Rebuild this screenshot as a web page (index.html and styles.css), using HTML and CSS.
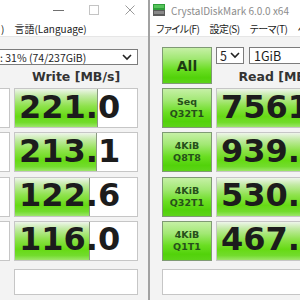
FILE: index.html
```html
<!DOCTYPE html>
<html lang="ja">
<head>
    <meta charset="UTF-8">
    <title>CrystalDiskMark</title>
    <link rel="stylesheet" href="styles.css">
</head>
<body>
    <div class="screen">
        <div class="win win-left">
            <div class="titlebar titlebar-left">
                <span class="ctl">
                    <svg width="11" height="11" viewBox="0 0 11 11"><rect x="0" y="5" width="11" height="1" fill="#707070"/></svg>
                </span>
                <span class="ctl">
                    <svg width="10" height="10" viewBox="0 0 10 10"><rect x="0.5" y="0.5" width="9" height="9" fill="none" stroke="#c4c4c4" stroke-width="1"/></svg>
                </span>
                <span class="ctl">
                    <svg width="10" height="10" viewBox="0 0 10 10"><path d="M0.5 0.5 L9.5 9.5 M9.5 0.5 L0.5 9.5" stroke="#9a9a9a" stroke-width="1"/></svg>
                </span>
            </div>
            <div class="menubar menubar-left">
                <span class="menu-cut">)</span>
                <span>言語(Language)</span>
            </div>
            <div class="content content-left">
                <div class="drive-select">
                    <span>: 31% (74/237GiB)</span>
                    <svg class="chev" width="10" height="7" viewBox="0 0 10 7"><polyline points="1,1 5,5 9,1" fill="none" stroke="#222" stroke-width="1.6"/></svg>
                </div>
                <div class="head-row">
                    <div></div>
                    <div class="col-head">Write [MB/s]</div>
                </div>
                <div class="rows rows-left">
                    <div class="cell stub"></div>
                    <div class="cell value"><div class="bar" style="width: 67%"></div><span>221.0</span></div>
                    <div class="cell stub"></div>
                    <div class="cell value"><div class="bar" style="width: 66%"></div><span>213.1</span></div>
                    <div class="cell stub"></div>
                    <div class="cell value"><div class="bar" style="width: 61%"></div><span>122.6</span></div>
                    <div class="cell stub"></div>
                    <div class="cell value"><div class="bar" style="width: 60.5%"></div><span>116.0</span></div>
                </div>
                <div class="comment"></div>
            </div>
        </div>

        <div class="win win-right">
            <div class="titlebar titlebar-right">
                <svg class="app-icon" width="12" height="12" viewBox="0 0 12 12">
                    <rect x="0" y="0" width="12" height="6" fill="#2f9e3a"/>
                    <rect x="1" y="1" width="10" height="3" fill="#55c45a"/>
                    <rect x="0" y="6" width="12" height="6" fill="#5c5c5c"/>
                    <rect x="1" y="7" width="10" height="3" fill="#8a8a8a"/>
                </svg>
                <span class="app-title">CrystalDiskMark 6.0.0 x64</span>
            </div>
            <div class="menubar menubar-right">
                <span>ファイル(F)</span>
                <span>設定(S)</span>
                <span>テーマ(T)</span>
                <span>ヘルプ(H)</span>
            </div>
            <div class="content content-right">
                <div class="top-grid">
                    <div class="btn btn-all">All</div>
                    <div class="controls">
                        <div class="select-small">
                            <span>5</span>
                            <svg width="10" height="7" viewBox="0 0 10 7"><polyline points="1,1 5,5 9,1" fill="none" stroke="#222" stroke-width="1.6"/></svg>
                        </div>
                        <div class="select-size"><span>1GiB</span></div>
                    </div>
                    <div class="col-head col-head-read">Read [MB/s]</div>
                </div>
                <div class="rows rows-right">
                    <div class="btn">Seq<br>Q32T1</div>
                    <div class="cell value"><div class="bar" style="width: 100%"></div><span>7561</span></div>
                    <div class="btn">4KiB<br>Q8T8</div>
                    <div class="cell value"><div class="bar" style="width: 100%"></div><span>939.8</span></div>
                    <div class="btn">4KiB<br>Q32T1</div>
                    <div class="cell value"><div class="bar" style="width: 100%"></div><span>530.8</span></div>
                    <div class="btn">4KiB<br>Q1T1</div>
                    <div class="cell value"><div class="bar" style="width: 100%"></div><span>467.9</span></div>
                </div>
                <div class="comment comment-right"></div>
            </div>
        </div>
    </div>
</body>
</html>
```

FILE: styles.css
```css
body {
    margin: 0;
    font-family: "Noto Sans CJK JP", "Noto Sans", sans-serif;
    color: #1e1e1e;
}

.screen {
    display: flex;
    width: 300px;
    height: 300px;
    overflow: hidden;
    background-color: #f3f3f3;
}

.win {
    flex: none;
    background-color: #f3f3f3;
}

.win-left {
    width: 148px;
    border-right: 2px solid #a2a2a2;
}

.win-right {
    width: 300px;
}

/* title bars */
.titlebar {
    height: 20px;
    background-color: #fff;
    display: flex;
    align-items: center;
}

.titlebar-left {
    justify-content: flex-end;
}

.ctl {
    width: 36px;
    height: 20px;
    display: flex;
    align-items: center;
    justify-content: center;
}

.ctl svg {
    display: block;
}

.titlebar-right {
    padding-left: 3px;
}

.app-icon {
    display: block;
}

.app-title {
    margin-left: 6px;
    font-size: 10px;
    color: #8c8c8c;
    white-space: nowrap;
}

/* menus */
.menubar {
    height: 16px;
    background-color: #fff;
    border-bottom: 1px solid #e6e6e6;
    display: flex;
    align-items: center;
    font-size: 10px;
    font-feature-settings: "palt";
    white-space: nowrap;
    color: #222;
}

.menu-cut {
    margin-left: 1px;
    margin-right: 10px;
}

.menubar-right {
    padding-left: 6px;
    gap: 10px;
    letter-spacing: -0.5px;
}

/* content */
.content-left {
    padding: 12px 10px 0 0;
}

.content-right {
    padding: 10px 0 0 12px;
}

.drive-select {
    height: 14px;
    border: 1px solid #7c7c7c;
    border-left: none;
    background-color: #fff;
    display: flex;
    align-items: center;
    justify-content: space-between;
    font-size: 10.5px;
    white-space: nowrap;
    padding-right: 5px;
}

.head-row {
    height: 23px;
    display: grid;
    grid-template-columns: 10px 1fr;
    gap: 4px;
}

.col-head {
    font-family: "DejaVu Sans", sans-serif;
    font-weight: bold;
    font-size: 12.5px;
    color: #333;
    display: flex;
    align-items: center;
    justify-content: center;
    white-space: nowrap;
}

.rows {
    display: grid;
    grid-auto-rows: 40px;
    row-gap: 4.33px;
    column-gap: 4px;
}

.rows-left {
    grid-template-columns: 10px 1fr;
}

.rows-right {
    grid-template-columns: 50px 130px;
}

.cell {
    border: 1px solid #c6c6c6;
    background-color: #fff;
    box-sizing: border-box;
}

.stub {
    border-left: none;
}

.value {
    position: relative;
    display: flex;
    align-items: center;
    padding-left: 4px;
    font-family: "DejaVu Sans", sans-serif;
    font-weight: bold;
    font-size: 32px;
    color: #1c1c1c;
    white-space: nowrap;
    overflow: hidden;
}

.value span {
    position: relative;
    margin-top: -3px;
}

.bar {
    position: absolute;
    left: 0;
    top: 0;
    bottom: 0;
    border-right: 1px solid #8a9a80;
    background: linear-gradient(to bottom, #eef5ea 0%, #c2eaa4 18%, #8ee24c 45%, #66da14 72%, #72dc2c 88%, #9ce66a 100%);
}

.rows-right .bar {
    border-right: none;
}

.comment {
    margin-top: 8px;
    height: 24px;
    border: 1px solid #c6c6c6;
    background-color: #fff;
    margin-left: 14px;
}

.comment-right {
    margin-left: 0;
}

/* buttons */
.btn {
    box-sizing: border-box;
    border: 1px solid #7f9a74;
    background: linear-gradient(to bottom, #c6f0a6 0%, #a2e874 30%, #6ade22 62%, #52d20a 85%, #5cd418 100%);
    display: flex;
    align-items: center;
    justify-content: center;
    text-align: center;
    font-family: "DejaVu Sans", sans-serif;
    font-weight: bold;
    font-size: 9.5px;
    line-height: 12px;
    color: #26501a;
}

.top-grid {
    display: grid;
    grid-template-columns: 50px 130px;
    grid-template-rows: 17px 20px;
    column-gap: 4px;
    margin-bottom: 4px;
}

.btn-all {
    grid-row: 1 / 3;
    font-size: 14px;
    color: #1e3c12;
}

.controls {
    display: flex;
    gap: 5px;
}

.select-small,
.select-size {
    box-sizing: border-box;
    height: 17px;
    border: 1px solid #7c7c7c;
    background-color: #fff;
    display: flex;
    align-items: center;
    font-size: 12.5px;
}

.select-small {
    width: 28px;
    padding: 0 3px;
    justify-content: space-between;
}

.select-size {
    width: 90px;
    padding-left: 4px;
}

.col-head-read {
    padding-top: 4px;
}
```
